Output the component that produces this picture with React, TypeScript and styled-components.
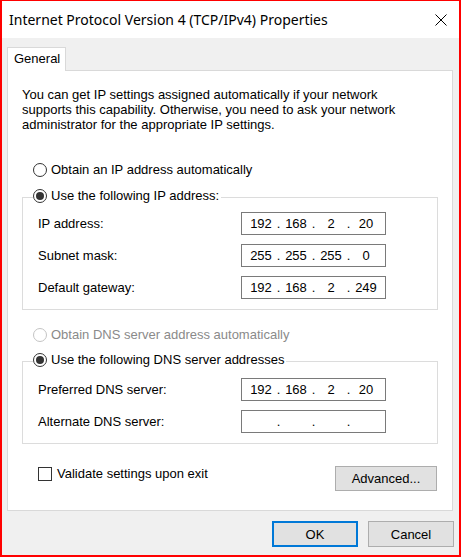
import { FC } from 'react'
import styled, { createGlobalStyle } from 'styled-components'

const GlobalStyle = createGlobalStyle`
  html, body {
    margin: 0;
    padding: 0;
    background: #ffffff;
  }
  * {
    box-sizing: border-box;
  }
`

const Window = styled.div`
  width: 461px;
  height: 557px;
  display: flex;
  flex-direction: column;
  border: 2px solid #ff0000;
  border-top-width: 1px;
  font-family: 'Liberation Sans', Arial, sans-serif;
  font-size: 13px;
  color: #000;
  background: #f0f0f0;
`

const TitleBar = styled.div`
  height: 37px;
  flex: none;
  display: flex;
  align-items: center;
  justify-content: space-between;
  padding: 0 12px 0 7px;
  background: #ffffff;
`

const Title = styled.span`
  font-family: 'Noto Sans', 'Open Sans', sans-serif;
  font-size: 14px;
  color: #000;
`

const Body = styled.div`
  flex: 1;
  display: flex;
  flex-direction: column;
  padding: 9px 5px 8px 5px;
`

const TabStrip = styled.div`
  display: flex;
`

const Tab = styled.div`
  position: relative;
  width: 59px;
  height: 24px;
  margin-bottom: -1px;
  padding: 3px 0 0 6px;
  background: #ffffff;
  border: 1px solid #d9d9d9;
  border-bottom: none;
`

const Panel = styled.div`
  flex: 1;
  margin-right: 1px;
  padding: 16px 14px 17px 14px;
  background: #ffffff;
  border: 1px solid #d9d9d9;
  display: flex;
  flex-direction: column;
`

const Intro = styled.p`
  margin: 0;
  line-height: 15px;
`

const RadioRow = styled.label<{ $disabled?: boolean }>`
  display: flex;
  align-items: center;
  gap: 4px;
  height: 15px;
  line-height: 15px;
  color: ${({ $disabled }) => ($disabled ? '#8a8a8a' : '#000')};
`

const StandaloneRadio = styled(RadioRow)<{ $top: number }>`
  margin: ${({ $top }) => $top}px 0 0 11px;
`

const RadioCircle = styled.span<{ $checked?: boolean; $disabled?: boolean }>`
  width: 14px;
  height: 14px;
  flex: none;
  border-radius: 50%;
  border: 1px solid ${({ $disabled }) => ($disabled ? '#c4c4c4' : '#333333')};
  background: #ffffff;
  display: flex;
  align-items: center;
  justify-content: center;

  &::after {
    content: '';
    display: ${({ $checked }) => ($checked ? 'block' : 'none')};
    width: 8px;
    height: 8px;
    border-radius: 50%;
    background: #333333;
  }
`

const GroupBox = styled.fieldset<{ $top: number; $pad: number }>`
  margin: ${({ $top }) => $top}px 0 0 0;
  padding: ${({ $pad }) => $pad}px 0 10px 10px;
  min-inline-size: 0;
  border: 1px solid #dcdcdc;
`

const Caption = styled.legend`
  padding: 0 2px 3px 0;
`

const Rows = styled.div`
  display: flex;
  flex-direction: column;
  gap: 9px;
  padding: 0 51px 0 5px;
`

const FieldRow = styled.div`
  display: grid;
  grid-template-columns: 1fr 145px;
  align-items: center;
`

const IpBox = styled.div`
  height: 23px;
  display: grid;
  grid-template-columns: 28px 7px 28px 7px 28px 7px 28px;
  align-items: center;
  padding-left: 5px;
  border: 1px solid #7a7a7a;
  background: #ffffff;
  text-align: center;
`

const BottomRow = styled.div`
  margin-top: 22px;
  display: flex;
  justify-content: space-between;
  align-items: flex-start;
  padding: 0 1px 0 16px;
`

const CheckRow = styled.label`
  display: flex;
  align-items: center;
  gap: 5px;
  height: 15px;
`

const CheckBox = styled.span`
  width: 14px;
  height: 14px;
  border: 1px solid #333333;
  background: #ffffff;
`

const Button = styled.button<{ $default?: boolean; $width: number; $height: number }>`
  width: ${({ $width }) => $width}px;
  height: ${({ $height }) => $height}px;
  padding: 0;
  font-family: inherit;
  font-size: 13px;
  color: #000;
  background: #e1e1e1;
  border: ${({ $default }) => ($default ? '2px solid #0078d7' : '1px solid #adadad')};
  border-radius: 0;
`

const Footer = styled.div`
  margin-top: 10px;
  display: flex;
  justify-content: flex-end;
  gap: 10px;
`

const CloseIcon: FC = () => (
  <svg width='12' height='12' viewBox='0 0 12 12'>
    <path d='M0.5 0.5 L11.5 11.5 M11.5 0.5 L0.5 11.5' stroke='#000' strokeWidth='1' fill='none' />
  </svg>
)

const IpField: FC<{ value: string[] }> = ({ value }) => (
  <IpBox>
    <span>{value[0]}</span>
    <span>.</span>
    <span>{value[1]}</span>
    <span>.</span>
    <span>{value[2]}</span>
    <span>.</span>
    <span>{value[3]}</span>
  </IpBox>
)

const Radio: FC<{ label: string; checked?: boolean; disabled?: boolean }> = ({
  label,
  checked,
  disabled,
}) => (
  <RadioRow $disabled={disabled}>
    <RadioCircle $checked={checked} $disabled={disabled} />
    {label}
  </RadioRow>
)

const ipRows = [
  { label: 'IP address:', value: ['192', '168', '2', '20'] },
  { label: 'Subnet mask:', value: ['255', '255', '255', '0'] },
  { label: 'Default gateway:', value: ['192', '168', '2', '249'] },
]

const dnsRows = [
  { label: 'Preferred DNS server:', value: ['192', '168', '2', '20'] },
  { label: 'Alternate DNS server:', value: ['', '', '', ''] },
]

const App: FC = () => (
  <>
    <GlobalStyle />
    <Window>
      <TitleBar>
        <Title>Internet Protocol Version 4 (TCP/IPv4) Properties</Title>
        <CloseIcon />
      </TitleBar>
      <Body>
        <TabStrip>
          <Tab>General</Tab>
        </TabStrip>
        <Panel>
          <Intro>
            You can get IP settings assigned automatically if your network
            <br />
            supports this capability. Otherwise, you need to ask your network
            <br />
            administrator for the appropriate IP settings.
          </Intro>

          <StandaloneRadio $top={30}>
            <RadioCircle />
            Obtain an IP address automatically
          </StandaloneRadio>

          <GroupBox $top={11} $pad={6}>
            <Caption>
              <Radio label='Use the following IP address:' checked />
            </Caption>
            <Rows>
              {ipRows.map(row => (
                <FieldRow key={row.label}>
                  <span>{row.label}</span>
                  <IpField value={row.value} />
                </FieldRow>
              ))}
            </Rows>
          </GroupBox>

          <StandaloneRadio $top={17} $disabled>
            <RadioCircle $disabled />
            Obtain DNS server address automatically
          </StandaloneRadio>

          <GroupBox $top={10} $pad={8}>
            <Caption>
              <Radio label='Use the following DNS server addresses' checked />
            </Caption>
            <Rows>
              {dnsRows.map(row => (
                <FieldRow key={row.label}>
                  <span>{row.label}</span>
                  <IpField value={row.value} />
                </FieldRow>
              ))}
            </Rows>
          </GroupBox>

          <BottomRow>
            <CheckRow>
              <CheckBox />
              Validate settings upon exit
            </CheckRow>
            <Button $width={102} $height={25}>Advanced...</Button>
          </BottomRow>
        </Panel>
        <Footer>
          <Button $default $width={86} $height={26}>OK</Button>
          <Button $width={86} $height={26}>Cancel</Button>
        </Footer>
      </Body>
    </Window>
  </>
)

export default App
